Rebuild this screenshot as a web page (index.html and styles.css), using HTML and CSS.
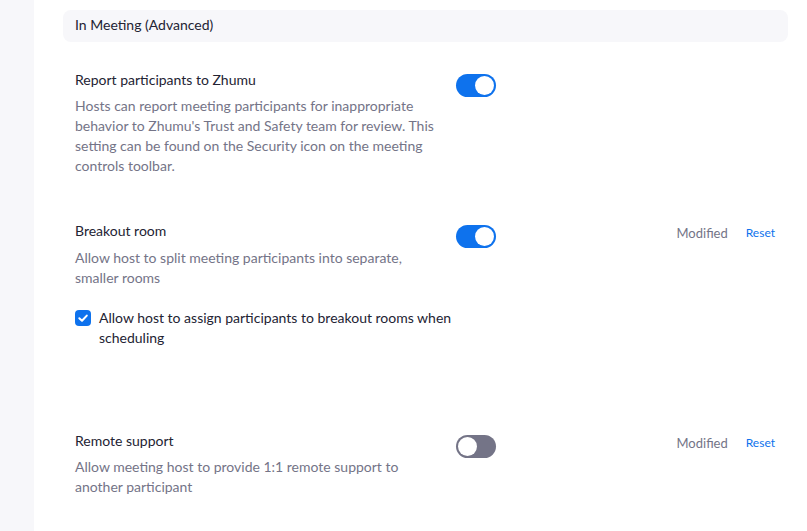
FILE: index.html
```html
<!DOCTYPE html>
<html lang="en">
<head>
<meta charset="utf-8">
<title>Settings</title>
<link rel="stylesheet" href="styles.css">
</head>
<body>
<div class="layout">
  <aside class="sidebar"></aside>
  <main class="main">
    <div class="section-head">In Meeting (Advanced)</div>

    <div class="setting s1">
      <div class="info">
        <div class="title">Report participants to Zhumu</div>
        <div class="desc">Hosts can report meeting participants for inappropriate behavior to Zhumu's Trust and Safety team for review. This setting can be found on the Security icon on the meeting controls toolbar.</div>
      </div>
      <div class="toggle on"><span class="knob"></span></div>
    </div>

    <div class="setting s2">
      <div class="info">
        <div class="title">Breakout room</div>
        <div class="desc">Allow host to split meeting participants into separate, smaller rooms</div>
        <label class="check">
          <span class="box"><svg viewBox="0 0 16 16" width="16" height="16"><path d="M4.3 8.2 L7 10.8 L11.8 5.6" fill="none" stroke="#fff" stroke-width="2" stroke-linecap="round" stroke-linejoin="round"/></svg></span>
          <span class="check-text">Allow host to assign participants to breakout rooms when scheduling</span>
        </label>
      </div>
      <div class="toggle on"><span class="knob"></span></div>
      <div class="status"><span class="modified">Modified</span><a class="reset">Reset</a></div>
    </div>

    <div class="setting s3">
      <div class="info">
        <div class="title">Remote support</div>
        <div class="desc">Allow meeting host to provide 1:1 remote support to another participant</div>
      </div>
      <div class="toggle off"><span class="knob"></span></div>
      <div class="status"><span class="modified">Modified</span><a class="reset">Reset</a></div>
    </div>
  </main>
</div>
</body>
</html>
```

FILE: styles.css
```css
html, body {
  margin: 0;
  padding: 0;
  background: #fff;
  font-family: Lato, "Open Sans", sans-serif;
  color: #232333;
}
.layout {
  display: flex;
  min-height: 531px;
}
.sidebar {
  width: 34px;
  flex: 0 0 34px;
  background: #f7f7fa;
}
.main {
  flex: 1;
  padding: 10px 19px 0 29px;
}
.section-head {
  height: 32px;
  line-height: 30px;
  background: #f7f7fa;
  border-radius: 8px;
  padding: 0 12px;
  font-size: 14px;
  color: #232333;
}
.setting {
  display: flex;
  align-items: flex-start;
  padding-left: 12px;
}
.s1 { margin-top: 28px; }
.s2 { margin-top: 45px; }
.s3 { margin-top: 83px; }
.info {
  width: 381px;
  flex: 0 0 381px;
}
.title {
  font-size: 14px;
  line-height: 20px;
  color: #232333;
}
.desc {
  width: 365px;
  margin-top: 6px;
  font-size: 14px;
  line-height: 20px;
  color: #747487;
}
.s2 .desc { margin-top: 7px; }
.check {
  display: flex;
  align-items: flex-start;
  margin-top: 20px;
  font-size: 14px;
  line-height: 20px;
  color: #232333;
}
.box {
  width: 16px;
  height: 16px;
  flex: 0 0 16px;
  border-radius: 4px;
  background: #0e72ed;
  margin-top: 2px;
  margin-right: 8px;
  display: flex;
}
.check-text { width: 360px; }
.toggle {
  width: 40px;
  height: 23px;
  flex: 0 0 40px;
  border-radius: 12px;
  margin-top: 4px;
  position: relative;
  box-sizing: border-box;
}
.toggle.on { background: #0e72ed; }
.toggle.off { background: #747487; }
.knob {
  position: absolute;
  top: 2px;
  width: 19px;
  height: 19px;
  border-radius: 50%;
  background: #fff;
  box-sizing: border-box;
}
.toggle.on .knob { right: 2px; }
.toggle.off .knob { left: 2px; }
.status {
  margin-left: auto;
  display: flex;
  align-items: center;
  padding-top: 3px;
  padding-right: 13px;
}
.modified {
  font-size: 13px;
  line-height: 18px;
  color: #747487;
}
.reset {
  margin-left: 18px;
  font-size: 12px;
  line-height: 18px;
  color: #0e72ed;
  cursor: pointer;
}
```
